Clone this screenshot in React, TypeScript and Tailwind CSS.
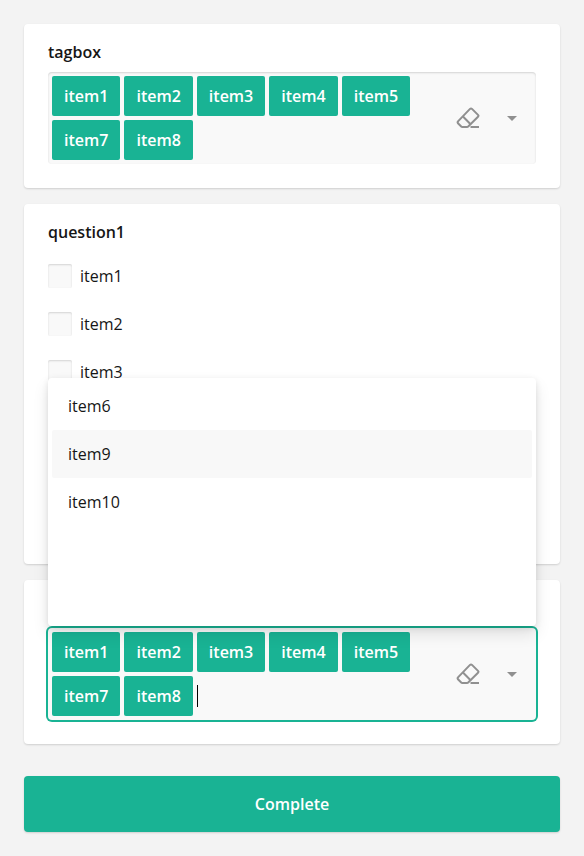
import React from "react";

const tags = ["item1", "item2", "item3", "item4", "item5", "item7", "item8"];
const card = "rounded-[4px] bg-white px-6 shadow-[0_1px_2px_rgba(0,0,0,0.15)]";

function EraserIcon() {
  return (
    <svg width="24" height="24" viewBox="0 0 24 24" fill="none" stroke="#909090" strokeWidth="2">
      <path d="M14 2.9 Q15 2 16 2.9 L22 8.9 Q22.9 9.8 22 10.7 L12.2 20.5 Q11.7 21 11 21 H6.2 Q5.7 21 5.2 20.5 L2 17.3 Q1.2 16.3 2 15.3 Z" />
      <path d="M6.7 10.3 L14.6 18.2" />
      <path d="M14.5 21 H23" />
    </svg>
  );
}

function Tagbox({ focused = false }: { focused?: boolean }) {
  return (
    <div
      className={
        "flex h-[92px] rounded-[4px] bg-[#f9f9f9] p-1 " +
        (focused ? "shadow-[0_0_0_2px_#19b394]" : "shadow-[inset_0_1px_2px_rgba(0,0,0,0.15)]")
      }
    >
      <div className="flex w-[392px] flex-wrap content-start gap-1">
        {tags.map((t) => (
          <span
            key={t}
            className="flex h-10 items-center rounded-[2px] bg-[#19b394] px-3 text-base font-semibold text-white"
          >
            {t}
          </span>
        ))}
        {focused && <span className="mt-[9px] h-[22px] w-px bg-black" />}
      </div>
      <div className="ml-3 flex items-center">
        <EraserIcon />
        <svg className="ml-5" width="24" height="24" viewBox="0 0 24 24" fill="#909090">
          <path d="M7 10 H17 L12 15 Z" />
        </svg>
      </div>
    </div>
  );
}

function Title({ children }: { children: React.ReactNode }) {
  return <h5 className="text-base leading-6 font-semibold text-[#161616]">{children}</h5>;
}

export default function App() {
  return (
    <main className="h-[856px] w-[584px] overflow-hidden bg-[#f3f3f3] p-6 font-['Open_Sans',sans-serif] text-base text-[#161616]">
      <section className={card + " h-[164px] pt-4"}>
        <Title>tagbox</Title>
        <div className="mt-2">
          <Tagbox />
        </div>
      </section>

      <section className={card + " mt-4 h-[360px] pt-4"}>
        <Title>question1</Title>
        <div className="mt-5 flex flex-col gap-6">
          {["item1", "item2", "item3"].map((t) => (
            <label key={t} className="flex h-6 items-center gap-2">
              <span className="size-6 rounded-[2px] bg-[#f9f9f9] shadow-[inset_0_1px_2px_rgba(0,0,0,0.15)]" />
              <span>{t}</span>
            </label>
          ))}
        </div>
      </section>

      <section className={card + " mt-4 h-[164px] pt-12"}>
        <div className="relative">
          <Tagbox focused />
          <ul className="absolute bottom-[94px] left-0 h-[248px] w-full rounded-[4px] bg-white p-1 shadow-[0_2px_6px_rgba(0,0,0,0.1),0_8px_16px_rgba(0,0,0,0.1)]">
            {["item6", "item9", "item10"].map((t) => (
              <li
                key={t}
                className={"flex h-12 items-center rounded-[2px] px-4 " + (t === "item9" ? "bg-[#f8f8f8]" : "")}
              >
                {t}
              </li>
            ))}
          </ul>
        </div>
      </section>

      <button className="mt-8 block h-14 w-full rounded-[4px] bg-[#19b394] text-base font-semibold text-white shadow-[0_1px_2px_rgba(0,0,0,0.15)]">
        Complete
      </button>
    </main>
  );
}
